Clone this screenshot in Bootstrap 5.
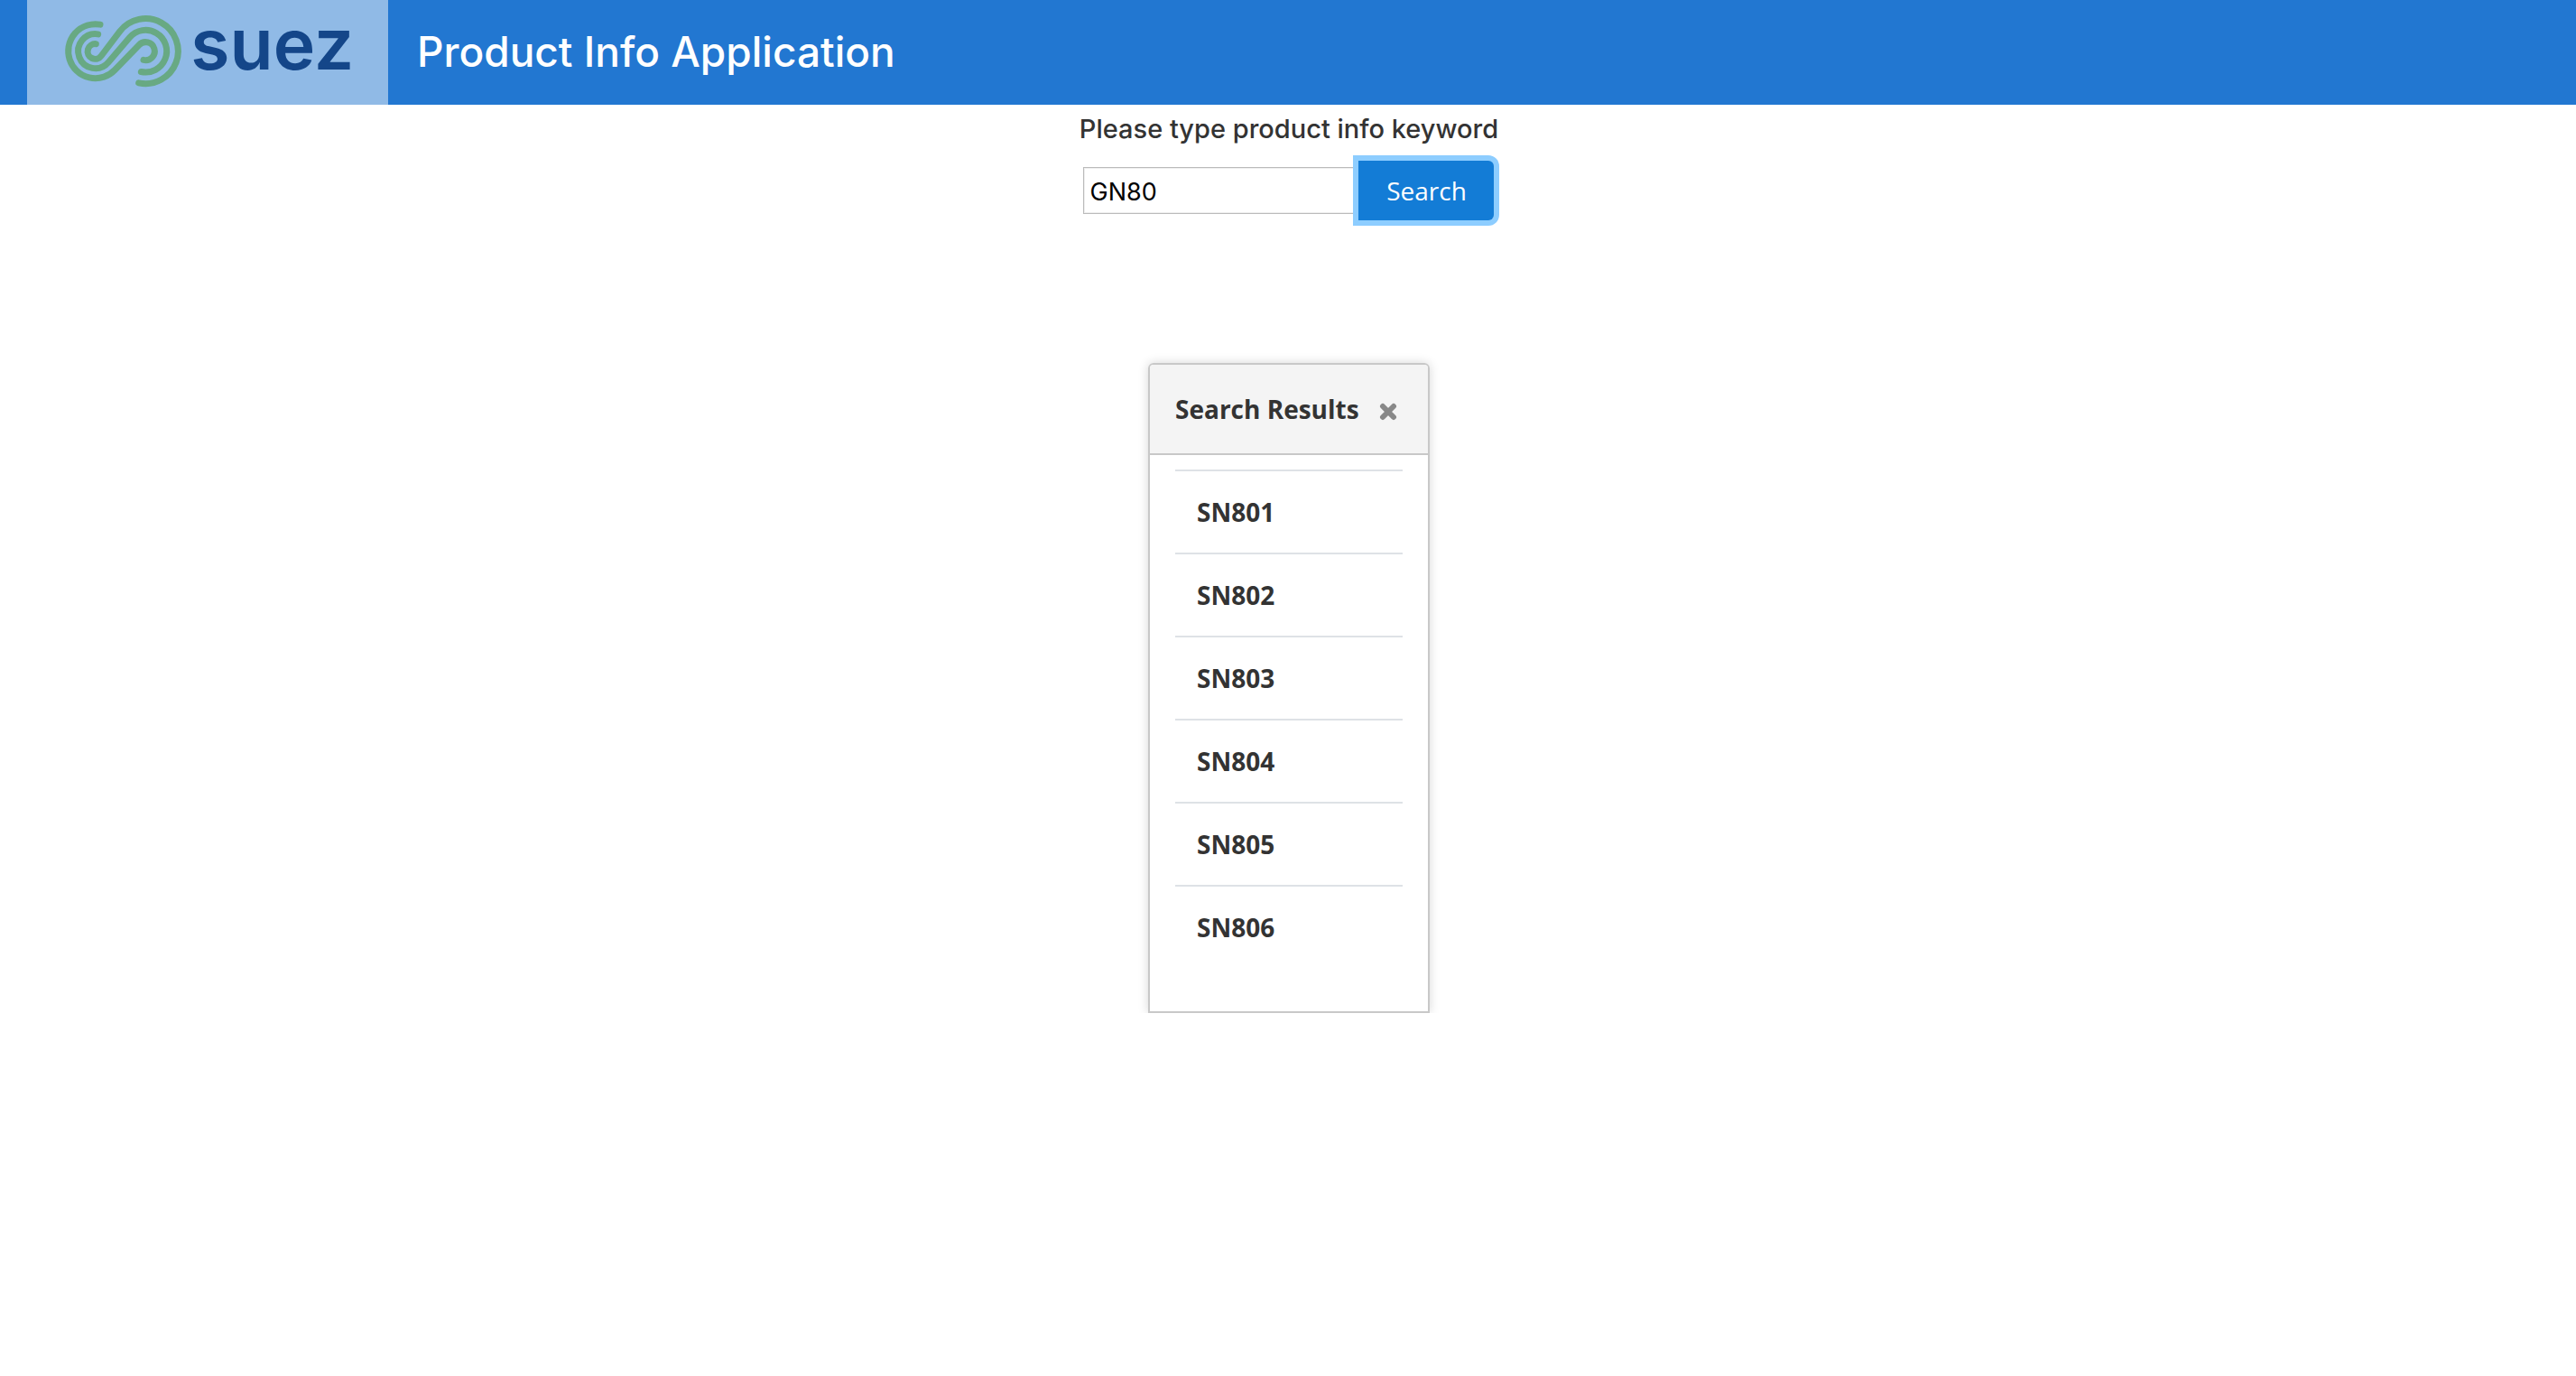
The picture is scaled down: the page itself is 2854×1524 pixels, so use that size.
<!DOCTYPE html>
<html lang="en">
<head>
<meta charset="utf-8">
<meta name="viewport" content="width=device-width, initial-scale=1">
<title>Product Info Application</title>
<link rel="stylesheet" href="https://cdn.jsdelivr.net/npm/bootstrap@5.3.0/dist/css/bootstrap.min.css">
<style>
  body { font-family: Inter, sans-serif; color: #333; background: #fff; }
  .app-bar { background: #2277d1; padding: 0 30px; gap: 32px; }
  .brand-logo { background: #90bae6; width: 400px; }
  .brand-logo svg { display: block; width: 100%; }
  .brand-logo text { font: 600 236px Inter, sans-serif; fill: #144689; }
  .app-title { font-size: 46px; line-height: 56px; font-weight: 500; padding-bottom: 2px; }
  .page-main { padding-left: 2px; }
  .prompt { font-size: 29px; line-height: 36px; font-weight: 500; padding: 9px 0 17px; }
  .keyword { width: 305px; height: 52px; padding: 2px 6px 0; border: 1px solid #bbb; box-shadow: inset 1px 1px 0 #eee, inset 0 -1px 0 #eee; font-size: 27px; color: #000; border-radius: 0; outline: 0; }
  .search-btn, .search-btn:hover { width: 150px; height: 66px; padding: 0; border: 0; border-radius: 0 6px 6px 0; background: #137cd6; color: #fff; font: 28px "Open Sans", sans-serif; box-shadow: 0 0 0 6px #8dcdff; }
  .results { width: 312px; margin-top: 158px; border: 2px solid #c8c8c8; border-radius: 6px 6px 0 0; box-shadow: 0 0 12px rgba(0,0,0,.16); font-family: "Open Sans", sans-serif; font-size: 28px; line-height: 38px; }
  .results-head { background: #f4f4f4; border-bottom: 2px solid #c8c8c8; border-radius: 4px 4px 0 0; padding: 30px 34px 30px 28px; }
  .results-title { font-size: 28px; line-height: 38px; font-weight: 700; }
  .close-btn { color: #888; }
  .close-btn svg { display: block; width: 20px; height: 26px; }
  .results-body { padding: 16px 28px 48px; }
  .results-body li { border-top: 2px solid #dee2e6; padding: 26px 24px; }
</style>
<script src="https://cdn.jsdelivr.net/npm/bootstrap@5.3.0/dist/js/bootstrap.bundle.min.js"></script>
</head>
<body>
<header class="app-bar d-flex align-items-center">
  <div class="brand-logo flex-shrink-0">
    <svg viewBox="90 0 1200 348" role="img" aria-label="suez">
      <g fill="none" stroke="#68a983" stroke-width="21" stroke-linecap="round">
        <path d="M333 81.4A90 90 0 1 0 381.7 232.6L462.4 149.1A30 30 0 1 1 477 199.2"/>
        <path d="M326 113.7A57 57 0 1 0 360.3 207L430.8 124.5A70 70 0 1 1 469 238.4"/>
        <path d="M319 146A25 25 0 1 0 336.9 185.1L398 104.7A108 108 0 1 1 461 275.5"/>
      </g>
      <text x="634" y="232">suez</text>
    </svg>
  </div>
  <h1 class="app-title text-white mb-0">Product Info Application</h1>
</header>
<main class="page-main d-flex flex-column align-items-center">
  <form class="d-flex flex-column align-items-center" onsubmit="return false">
    <label class="prompt" for="keyword">Please type product info keyword</label>
    <div class="d-flex align-items-center">
      <input class="keyword" id="keyword" type="text" value="GN80">
      <button class="btn search-btn" type="submit">Search</button>
    </div>
  </form>
  <section class="results" aria-labelledby="results-title">
    <div class="results-head d-flex align-items-center justify-content-between">
      <h2 class="results-title mb-0 text-nowrap" id="results-title">Search Results</h2>
      <button class="close-btn btn p-0 border-0" type="button" aria-label="Close">
        <svg viewBox="0 0 20 26"><path d="M4 10L16 22M16 10L4 22" stroke="currentColor" stroke-width="6" stroke-linecap="round"/></svg>
      </button>
    </div>
    <ul class="results-body list-unstyled mb-0 fw-bold">
      <li>SN801</li>
      <li>SN802</li>
      <li>SN803</li>
      <li>SN804</li>
      <li>SN805</li>
      <li>SN806</li>
    </ul>
  </section>
</main>
</body>
</html>
